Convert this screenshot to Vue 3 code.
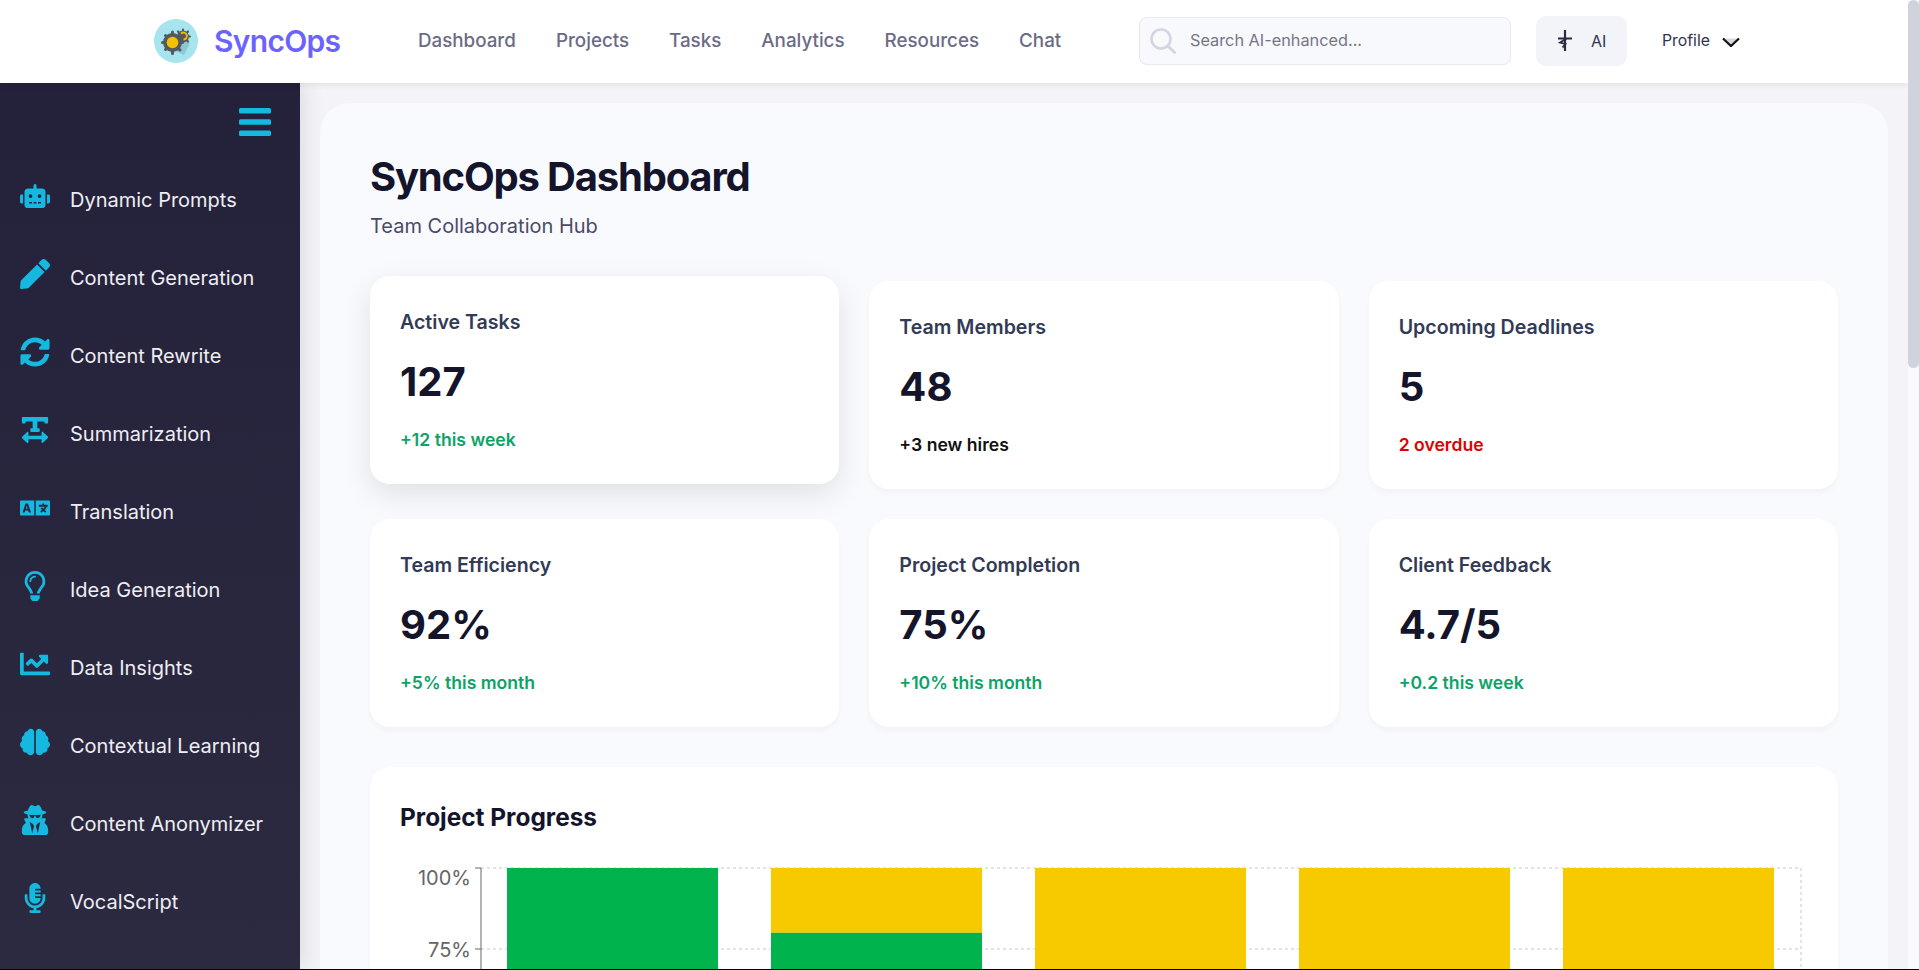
<script setup>
const topLinks = ['Dashboard', 'Projects', 'Tasks', 'Analytics', 'Resources', 'Chat']

const sideItems = [
  { label: 'Dynamic Prompts', vb: '0 0 640 512', d: 'M32,224H64V416H32A31.96166,31.96166,0,0,1,0,384V256A31.96166,31.96166,0,0,1,32,224Zm512-48V448a64.06328,64.06328,0,0,1-64,64H160a64.06328,64.06328,0,0,1-64-64V176a79.974,79.974,0,0,1,80-80H288V32a32,32,0,0,1,64,0V96H464A79.974,79.974,0,0,1,544,176ZM264,256a40,40,0,1,0-40,40A39.997,39.997,0,0,0,264,256Zm-8,128H192v32h64Zm96,0H288v32h64ZM456,256a40,40,0,1,0-40,40A39.997,39.997,0,0,0,456,256Zm-8,128H384v32h64ZM640,256V384a31.96166,31.96166,0,0,1-32,32H576V224h32A31.96166,31.96166,0,0,1,640,256Z' },
  { label: 'Content Generation', vb: '0 0 512 512', d: 'M290.74 93.24l128.02 128.02-277.99 277.99-114.14 12.6C11.35 513.54-1.56 500.62.14 485.34l12.7-114.22 277.9-278.88zm207.2-19.06l-60.11-60.11c-18.75-18.75-49.16-18.75-67.91 0l-56.55 56.55 128.02 128.02 56.55-56.55c18.75-18.76 18.75-49.16 0-67.91z' },
  { label: 'Content Rewrite', vb: '0 0 512 512', d: 'M370.72 133.28C339.458 104.008 298.888 87.962 255.848 88c-77.458.068-144.328 53.178-162.791 126.85-1.344 5.363-6.122 9.15-11.651 9.15H24.103c-7.498 0-13.194-6.807-11.807-14.176C33.933 94.924 134.813 8 256 8c66.448 0 126.791 26.136 171.315 68.685L463.03 40.97C478.149 25.851 504 36.559 504 57.941V192c0 13.255-10.745 24-24 24H345.941c-21.382 0-32.09-25.851-16.971-40.971l41.75-41.749zM32 296h134.059c21.382 0 32.09 25.851 16.971 40.971l-41.75 41.75c31.262 29.273 71.835 45.319 114.876 45.28 77.418-.07 144.315-53.144 162.787-126.849 1.344-5.363 6.122-9.15 11.651-9.15h57.304c7.498 0 13.194 6.807 11.807 14.176C478.067 417.076 377.187 504 256 504c-66.448 0-126.791-26.136-171.315-68.685L48.97 471.03C33.851 486.149 8 475.441 8 454.059V320c0-13.255 10.745-24 24-24z' },
  { label: 'Summarization', vb: '0 0 448 512', d: 'M432 32H16A16 16 0 0 0 0 48v80a16 16 0 0 0 16 16h32a16 16 0 0 0 16-16v-16h120v112h-24a16 16 0 0 0-16 16v32a16 16 0 0 0 16 16h128a16 16 0 0 0 16-16v-32a16 16 0 0 0-16-16h-24V112h120v16a16 16 0 0 0 16 16h32a16 16 0 0 0 16-16V48a16 16 0 0 0-16-16zm-68.69 260.69C354 283.36 336 288.36 336 304v48H112v-48c0-14.31-17.31-21.32-27.31-11.31l-80 80a16 16 0 0 0 0 22.62l80 80C94 480.64 112 475.64 112 460v-48h224v48c0 14.31 17.31 21.32 27.31 11.31l80-80a16 16 0 0 0 0-22.62z' },
  { label: 'Translation', vb: '0 0 640 512', d: 'M152.1 236.2c-3.5-12.1-7.8-33.2-7.8-33.2h-.5s-4.3 21.1-7.8 33.2l-11.1 37.5H163zM616 96H336v320h280c13.3 0 24-10.7 24-24V120c0-13.3-10.7-24-24-24zm-24 120c0 6.6-5.4 12-12 12h-11.4c-6.9 23.6-21.7 47.4-42.7 69.9 8.4 6.4 17.1 12.5 26.1 18 5.5 3.4 7.3 10.5 4.1 16.2l-7.9 13.9c-3.4 5.9-10.9 7.8-16.7 4.3-12.6-7.8-24.5-16.1-35.4-24.9-10.9 8.7-22.7 17.1-35.4 24.9-5.8 3.5-13.3 1.6-16.7-4.3l-7.9-13.9c-3.2-5.6-1.4-12.8 4.2-16.2 9.3-5.7 18-11.7 26.1-18-7.9-8.4-14.9-17-21-25.7-4-5.7-2.2-13.6 3.7-17.1l6.5-3.9 7.3-4.3c5.4-3.2 12.4-1.7 16 3.4 5 7 10.8 14 17.4 20.9 13.5-14.2 23.8-28.9 30-43.2H412c-6.6 0-12-5.4-12-12v-16c0-6.6 5.4-12 12-12h64v-16c0-6.6 5.4-12 12-12h16c6.6 0 12 5.4 12 12v16h64c6.6 0 12 5.4 12 12zM0 120v272c0 13.3 10.7 24 24 24h280V96H24c-13.3 0-24 10.7-24 24zm58.9 216.1L116.4 167c1.7-4.9 6.2-8.1 11.4-8.1h32.5c5.1 0 9.7 3.3 11.4 8.1l57.5 169.1c2.6 7.8-3.1 15.9-11.4 15.9h-22.9a12 12 0 0 1-11.5-8.6l-9.4-31.9h-60.2l-9.1 31.8c-1.5 5.1-6.2 8.7-11.5 8.7H70.3c-8.2 0-14-8.1-11.4-15.9z' },
  { label: 'Idea Generation', vb: '0 0 352 512', d: 'M176 80c-52.94 0-96 43.06-96 96 0 8.84 7.16 16 16 16s16-7.16 16-16c0-35.3 28.72-64 64-64 8.84 0 16-7.16 16-16s-7.16-16-16-16zM96.06 459.17c0 3.15.93 6.22 2.68 8.84l24.51 36.84c2.97 4.46 7.97 7.14 13.32 7.14h78.85c5.36 0 10.36-2.68 13.32-7.14l24.51-36.84c1.74-2.62 2.67-5.7 2.68-8.84l.05-43.18H96.02l.04 43.18zM176 0C73.72 0 0 82.97 0 176c0 44.37 16.45 84.85 43.56 115.78 16.64 18.99 42.74 58.8 52.42 92.16v.06h48v-.12c-.01-4.77-.72-9.51-2.15-14.07-5.59-17.81-22.82-64.77-62.17-109.67-20.54-23.43-31.52-53.15-31.61-84.14-.2-73.64 59.67-128 127.95-128 70.58 0 128 57.42 128 128 0 30.97-11.24 60.85-31.65 84.14-39.11 44.61-56.42 91.47-62.1 109.46a47.507 47.507 0 0 0-2.22 14.3v.1h48v-.05c9.68-33.37 35.78-73.18 52.42-92.16C335.55 260.85 352 220.37 352 176 352 78.8 273.2 0 176 0z' },
  { label: 'Data Insights', vb: '0 0 512 512', d: 'M496 384H64V80c0-8.84-7.16-16-16-16H16C7.16 64 0 71.16 0 80v336c0 17.67 14.33 32 32 32h464c8.84 0 16-7.16 16-16v-32c0-8.84-7.16-16-16-16zM464 96H345.94c-21.38 0-32.09 25.85-16.97 40.97l32.4 32.4L288 242.75l-73.37-73.37c-12.5-12.5-32.76-12.5-45.25 0l-68.69 68.69c-6.25 6.25-6.25 16.38 0 22.63l22.62 22.62c6.25 6.25 16.38 6.25 22.63 0L192 237.25l73.37 73.37c12.5 12.5 32.76 12.5 45.25 0l96-96 32.4 32.4c15.12 15.12 40.97 4.41 40.97-16.97V112c.01-8.84-7.15-16-16-16z' },
  { label: 'Contextual Learning', vb: '0 0 576 512', d: 'M208 0c-29.9 0-54.7 20.5-61.8 48.2-.8 0-1.4-.2-2.2-.2-35.3 0-64 28.7-64 64 0 4.8.6 9.5 1.7 14C52.5 138 32 166.6 32 200c0 12.6 3.2 24.3 8.3 34.9C16.3 248.7 0 274.3 0 304c0 33.3 20.4 61.9 49.4 73.9-.9 4.6-1.4 9.3-1.4 14.1 0 39.8 32.2 72 72 72 4.1 0 8.1-.5 12-1.2 9.6 28.5 36.2 49.2 68 49.2 39.8 0 72-32.2 72-72V64c0-35.3-28.7-64-64-64zm368 304c0-29.7-16.3-55.3-40.3-69.1 5.2-10.6 8.3-22.3 8.3-34.9 0-33.4-20.5-62-49.7-74 1-4.5 1.7-9.2 1.7-14 0-35.3-28.7-64-64-64-.8 0-1.5.2-2.2.2C422.7 20.5 397.9 0 368 0c-35.3 0-64 28.6-64 64v376c0 39.8 32.2 72 72 72 31.8 0 58.4-20.7 68-49.2 3.9.7 7.9 1.2 12 1.2 39.8 0 72-32.2 72-72 0-4.8-.5-9.5-1.4-14.1 29-12 49.4-40.6 49.4-73.9z' },
  { label: 'Content Anonymizer', vb: '0 0 448 512', d: 'M383.9 308.3l23.9-62.6c4-10.5-3.7-21.7-15-21.7h-58.5c11-18.9 17.8-40.6 17.8-64v-.3c39.2-7.8 64-19.1 64-31.7 0-13.3-27.3-25.1-70.1-33-9.2-32.8-27-65.8-40.6-82.8-9.5-11.9-25.9-15.6-39.5-8.8l-27.6 13.8c-9 4.5-19.6 4.5-28.6 0L182.1 3.4c-13.6-6.8-30-3.1-39.5 8.8-13.5 17-31.4 50-40.6 82.8-42.7 7.9-70 19.7-70 33 0 12.6 24.8 23.9 64 31.7v.3c0 23.4 6.8 45.1 17.8 64H56.3c-11.5 0-19.2 11.7-14.7 22.3l25.8 60.2C27.3 329.8 0 372.7 0 422.4v44.8C0 491.9 20.1 512 44.8 512h358.4c24.7 0 44.8-20.1 44.8-44.8v-44.8c0-48.4-25.8-90.4-64.1-114.1zM176 480l-41.6-192 49.6 32 24 40-32 120zm96 0l-32-120 24-40 49.6-32L272 480zm41.7-298.5c-3.9 11.9-7 24.6-16.5 33.4-10.1 9.3-48 22.4-64-25-2.8-8.4-15.4-8.4-18.3 0-17 50.2-56 32.4-64 25-9.5-8.8-12.7-21.5-16.5-33.4-.8-2.5-6.3-5.7-6.3-5.8v-10.8c28.3 3.6 61 5.8 96 5.8s67.7-2.1 96-5.8v10.8c-.1.1-5.6 3.2-6.4 5.8z' },
  { label: 'VocalScript', vb: '0 0 352 512', d: 'M336 192h-16c-8.84 0-16 7.16-16 16v48c0 74.8-64.49 134.82-140.79 127.38C96.71 376.89 48 317.11 48 250.3V208c0-8.84-7.16-16-16-16H16c-8.84 0-16 7.16-16 16v40.16c0 89.64 63.97 169.55 152 181.69V464H96c-8.84 0-16 7.16-16 16v16c0 8.84 7.16 16 16 16h160c8.84 0 16-7.16 16-16v-16c0-8.84-7.16-16-16-16h-56v-33.77C285.71 418.47 352 344.9 352 256v-48c0-8.84-7.16-16-16-16zM176 352c53.02 0 96-42.98 96-96h-85.33c-5.89 0-10.67-3.58-10.67-8v-16c0-4.42 4.78-8 10.67-8H272v-32h-85.33c-5.89 0-10.67-3.58-10.67-8v-16c0-4.42 4.78-8 10.67-8H272v-32h-85.33c-5.89 0-10.67-3.58-10.67-8v-16c0-4.42 4.78-8 10.67-8H272c0-53.02-42.98-96-96-96S80 42.98 80 96v160c0 53.02 42.98 96 96 96z' }
]

const cards = [
  { label: 'Active Tasks', value: '127', note: '+12 this week', tone: 'up', lifted: true },
  { label: 'Team Members', value: '48', note: '+3 new hires', tone: 'plain' },
  { label: 'Upcoming Deadlines', value: '5', note: '2 overdue', tone: 'down' },
  { label: 'Team Efficiency', value: '92%', note: '+5% this month', tone: 'up' },
  { label: 'Project Completion', value: '75%', note: '+10% this month', tone: 'up' },
  { label: 'Client Feedback', value: '4.7/5', note: '+0.2 this week', tone: 'up' }
]

const plotTop = 25
const plotHeight = 324
const plotLeft = 81
const slot = 264
const barWidth = 211
const done = [100, 80, 40, 55, 30]
const bars = done.map((pct, i) => ({
  x: plotLeft + 26 + i * slot,
  doneY: plotTop + plotHeight * (1 - pct / 100),
  doneH: plotHeight * pct / 100,
  restH: plotHeight * (1 - pct / 100)
}))
const grid = [100, 75, 50, 25, 0].map(pct => plotTop + plotHeight * (1 - pct / 100))
const ticks = [
  { pct: 100, y: plotTop, labelY: plotTop + 17 },
  { pct: 75, y: plotTop + plotHeight * 0.25, labelY: plotTop + plotHeight * 0.25 + 8 }
]
</script>

<template>
  <div class="shell">
    <div class="page">
      <header class="topbar">
        <div class="brand">
          <svg class="logo" viewBox="0 0 44 44" aria-hidden="true">
            <circle cx="22" cy="22" r="22" fill="#a6e4f0" />
            <path d="M13 28l17 8 6-12-6-3z" fill="#8cc7d6" />
            <g fill="none" stroke="#55585f" stroke-width="3" stroke-linecap="round">
              <path d="M18.500 13v2.500M18.500 32v2.500M8.500 23.500h2.500M26 23.500h2.500M11.500 16.500l2 2M24 29l2 2M11.500 30.500l2-2" />
              <path d="M29 10.500v1.500M36 17.500h-1.500M24 12.500l1.500 1.500M34 12.500l-1.500 1.500M34 22.500l-1.500-1.500" stroke-width="2.200" />
            </g>
            <circle cx="29" cy="17.500" r="6" fill="#55585f" />
            <circle cx="18.500" cy="23.500" r="9.500" fill="#55585f" />
            <circle cx="18.500" cy="23.500" r="5.800" fill="#f2c200" />
            <path d="M27 14.500a3.500 3.500 0 1 1 2.500 6" fill="none" stroke="#f2c200" stroke-width="1.800" />
          </svg>
          <span class="brand-name">SyncOps</span>
        </div>
        <nav class="top-links">
          <a v-for="link in topLinks" :key="link" class="top-link">{{ link }}</a>
        </nav>
        <label class="search">
          <svg class="search-icon" viewBox="0 0 26 26" aria-hidden="true">
            <circle cx="11" cy="11" r="9.500" fill="none" stroke="#d5d5e2" stroke-width="2.600" />
            <path d="M18 18l6.500 6.500" stroke="#d5d5e2" stroke-width="3" stroke-linecap="round" />
          </svg>
          <span class="search-text">Search AI-enhanced...</span>
        </label>
        <button class="ai-btn" type="button">
          <svg class="ai-icon" viewBox="0 0 14 21" aria-hidden="true">
            <path d="M7 0v21M0 8.500h14" stroke="#2b2b40" stroke-width="2.200" fill="none" />
            <path d="M8.500 8.500L2 12.500l5.500 1.500-3 3.500" stroke="#2b2b40" stroke-width="1.800" fill="none" />
          </svg>
          <span>AI</span>
        </button>
        <div class="profile">
          <span>Profile</span>
          <svg class="chevron" viewBox="0 0 18 10" aria-hidden="true">
            <path d="M1.500 1.500h15L9 8.500z" fill="#d8d8e2" />
            <path d="M1 1.500l8 7.500 8-7.500" fill="none" stroke="#111" stroke-width="2.200" />
          </svg>
        </div>
      </header>

      <div class="body-row">
        <aside class="sidebar">
          <div class="burger-row">
            <svg class="burger" viewBox="0 0 32 28" aria-hidden="true">
              <rect x="0" y="0" width="32" height="5.500" rx="1.500" />
              <rect x="0" y="11.250" width="32" height="5.500" rx="1.500" />
              <rect x="0" y="22.500" width="32" height="5.500" rx="1.500" />
            </svg>
          </div>
          <ul class="side-list">
            <li v-for="item in sideItems" :key="item.label" class="side-item">
              <svg class="side-icon" :viewBox="item.vb" aria-hidden="true"><path :d="item.d" /></svg>
              <span class="side-label">{{ item.label }}</span>
            </li>
          </ul>
        </aside>

        <main class="main">
          <section class="panel">
            <h1 class="title">SyncOps Dashboard</h1>
            <p class="subtitle">Team Collaboration Hub</p>

            <div class="card-grid">
              <article v-for="card in cards" :key="card.label" class="card" :class="{ lifted: card.lifted }">
                <h3 class="card-label">{{ card.label }}</h3>
                <div class="card-value">{{ card.value }}</div>
                <div class="card-note" :class="card.tone">{{ card.note }}</div>
              </article>
            </div>

            <section class="chart-card">
              <h2 class="chart-title">Project Progress</h2>
              <svg class="chart" width="1408" height="400" viewBox="0 0 1408 400" aria-label="Project progress chart">
                <g stroke="#c8c8c8" stroke-dasharray="3 3" fill="none">
                  <line v-for="y in grid" :key="y" :x1="plotLeft" :x2="plotLeft + slot * 5" :y1="y" :y2="y" />
                  <line :x1="plotLeft + slot * 5" :x2="plotLeft + slot * 5" :y1="plotTop" :y2="plotTop + plotHeight" />
                </g>
                <g v-for="(b, i) in bars" :key="i">
                  <rect :x="b.x" :y="plotTop" :width="barWidth" :height="b.restH" fill="#f7ca00" />
                  <rect :x="b.x" :y="b.doneY" :width="barWidth" :height="b.doneH" fill="#00b34d" />
                </g>
                <path :d="`M${plotLeft} ${plotTop}V${plotTop + plotHeight}`" stroke="#666" fill="none" />
                <g v-for="t in ticks" :key="t.pct">
                  <line :x1="plotLeft - 6" :x2="plotLeft" :y1="t.y" :y2="t.y" stroke="#666" />
                  <text :x="plotLeft - 10" :y="t.labelY" text-anchor="end" class="tick">{{ t.pct }}%</text>
                </g>
              </svg>
            </section>
          </section>
        </main>
      </div>
    </div>
    <div class="rail"><div class="rail-thumb"></div></div>
  </div>
</template>

<style>
html, body {
  margin: 0;
  height: 100%;
  overflow: hidden;
  background: #000;
}
</style>

<style scoped>
* { box-sizing: border-box; }

.shell {
  height: 969px;
  display: flex;
  overflow: hidden;
  font-family: Inter, "Noto Sans", sans-serif;
  color: #1a1a2e;
}
.page {
  flex: 1;
  min-width: 0;
  display: flex;
  flex-direction: column;
  overflow: hidden;
  background: #f3f3f8;
}
.rail { flex: none; width: 11px; background: #f9fafe; }
.rail-thumb { height: 368px; background: #d0d3dc; border-radius: 6px; }

.topbar {
  position: relative;
  z-index: 5;
  flex: none;
  height: 83px;
  display: flex;
  align-items: center;
  padding: 0 0 2px 154px;
  background: #fff;
  box-shadow: 0 2px 6px rgba(0, 0, 0, 0.08);
}
.brand { display: flex; align-items: center; gap: 16px; width: 264px; }
.logo { width: 44px; height: 44px; flex: none; }
.brand-name { font-size: 30px; font-weight: 600; color: #6c63ff; letter-spacing: -0.7px; }
.top-links { display: flex; gap: 40px; width: 721px; }
.top-link { font-size: 18.78px; font-weight: 500; color: #6b6b85; }
.search {
  width: 372px;
  height: 48px;
  display: flex;
  align-items: center;
  gap: 14px;
  padding-left: 10px;
  background: #f8f9fd;
  border: 1px solid #e8e8f0;
  border-radius: 8px;
}
.search-icon { width: 26px; height: 26px; flex: none; }
.search-text { font-size: 16.3px; color: #757585; margin-top: -1px; }
.ai-btn {
  width: 91px;
  height: 50px;
  margin-left: 25px;
  display: flex;
  align-items: center;
  justify-content: flex-start;
  gap: 19px;
  padding: 0 0 0 22px;
  border: 0;
  border-radius: 10px;
  background: #f3f4f9;
  font-family: inherit;
  font-size: 16px;
  color: #33334d;
}
.ai-icon { width: 14px; height: 21px; flex: none; }
.profile {
  margin-left: 35px;
  display: flex;
  align-items: center;
  gap: 12px;
  font-size: 15.8px;
  color: #33334d;
}
.chevron { width: 18px; height: 10px; margin-top: 3px; }

.body-row { flex: 1; min-height: 0; display: flex; align-items: stretch; }

.sidebar {
  position: relative;
  z-index: 3;
  flex: none;
  width: 300px;
  background: linear-gradient(180deg, #24213a 0%, #2c2a41 100%);
  box-shadow: 4px 0 20px rgba(0, 0, 0, 0.1);
}
.burger-row { display: flex; justify-content: flex-end; padding: 25px 29px 0 0; }
.burger { width: 32px; height: 28px; fill: #15b9e0; display: block; }
.side-list { list-style: none; margin: 0; padding: 25px 0 0 20px; }
.side-item { height: 78px; display: flex; align-items: center; gap: 20px; }
.side-icon { width: 30px; height: 30px; flex: none; fill: #15b9e0; margin-top: -8px; }
.side-label { font-size: 20px; font-weight: 400; color: #eeeef3; }

.main { flex: 1; min-width: 0; padding: 20px; }
.panel {
  min-height: 2428px;
  padding: 50px;
  background: #f9fafe;
  border-radius: 30px;
}
.title { margin: 0; font-size: 40px; line-height: 48px; font-weight: 700; color: #14142b; letter-spacing: -1.2px; }
.subtitle { margin: 13px 0 0; font-size: 20px; line-height: 24px; color: #4a4a68; }

.card-grid {
  display: grid;
  grid-template-columns: repeat(3, minmax(0, 1fr));
  gap: 30px;
  margin-top: 43px;
}
.card {
  height: 208px;
  padding: 30px;
  background: #fff;
  border-radius: 20px;
  box-shadow: 0 4px 6px rgba(0, 0, 0, 0.03);
}
.card.lifted {
  transform: translateY(-5px);
  box-shadow: 0 10px 30px rgba(0, 0, 0, 0.1);
}
.card-label { margin: 0; font-size: 19.6px; line-height: 32px; font-weight: 600; color: #333a56; }
.card-value { margin-top: 17px; font-size: 40px; line-height: 53px; font-weight: 700; color: #14142b; }
.card-note { margin-top: 20px; font-size: 17.6px; line-height: 24px; font-weight: 600; }
.up { color: #0ca368; }
.plain { color: #111; }
.down { color: #e00000; }

.chart-card {
  margin-top: 40px;
  padding: 30px;
  background: #fff;
  border-radius: 20px;
  box-shadow: 0 4px 6px rgba(0, 0, 0, 0.03);
}
.chart-title { margin: 0; font-size: 24.4px; line-height: 41px; font-weight: 700; color: #14142b; }
.chart { display: block; margin-top: 5px; }
.tick { font-family: Inter, sans-serif; font-size: 20px; fill: #666; }
</style>
